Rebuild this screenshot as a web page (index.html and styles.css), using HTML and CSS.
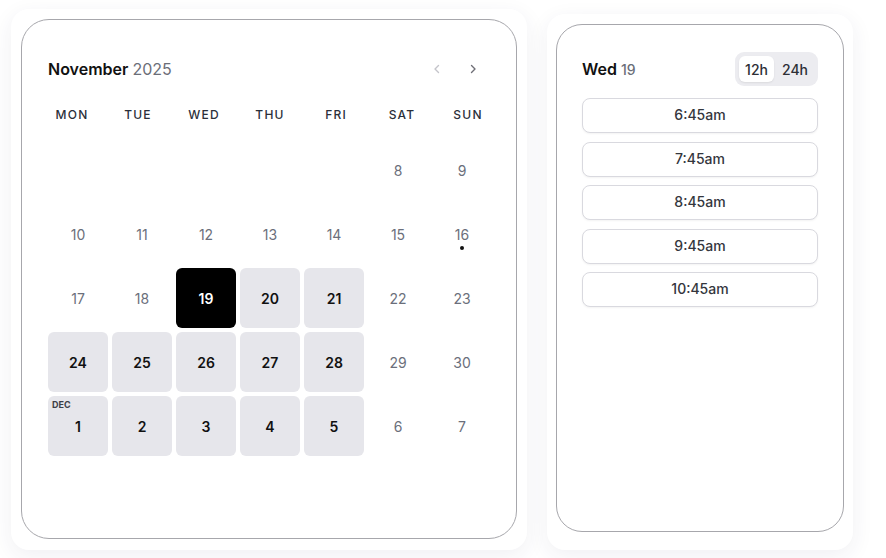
FILE: index.html
```html
<!DOCTYPE html>
<html lang="en">
<head>
<meta charset="utf-8">
<title>Booker</title>
<link rel="stylesheet" href="styles.css">
</head>
<body>
<div class="stage">
  <div class="shell shell-cal">
    <section class="card cal">
      <header class="cal-head">
        <h2 class="month"><span class="month-name">November</span> <span class="year">2025</span></h2>
        <div class="nav">
          <button class="nav-btn prev" aria-label="Previous month">
            <svg width="16" height="16" viewBox="0 0 16 16"><path d="M9.5 4.5L6 8l3.5 3.5" fill="none" stroke="currentColor" stroke-width="1.4" stroke-linecap="round" stroke-linejoin="round"/></svg>
          </button>
          <button class="nav-btn next" aria-label="Next month">
            <svg width="16" height="16" viewBox="0 0 16 16"><path d="M6.5 4.5L10 8l-3.5 3.5" fill="none" stroke="currentColor" stroke-width="1.4" stroke-linecap="round" stroke-linejoin="round"/></svg>
          </button>
        </div>
      </header>
      <div class="weekdays">
        <span>Mon</span><span>Tue</span><span>Wed</span><span>Thu</span><span>Fri</span><span>Sat</span><span>Sun</span>
      </div>
      <div class="days">
        <span class="day empty"></span><span class="day empty"></span><span class="day empty"></span><span class="day empty"></span><span class="day empty"></span>
        <span class="day">8</span><span class="day">9</span>
        <span class="day">10</span><span class="day">11</span><span class="day">12</span><span class="day">13</span><span class="day">14</span><span class="day">15</span><span class="day today">16</span>
        <span class="day">17</span><span class="day">18</span><span class="day avail selected">19</span><span class="day avail">20</span><span class="day avail">21</span><span class="day">22</span><span class="day">23</span>
        <span class="day avail">24</span><span class="day avail">25</span><span class="day avail">26</span><span class="day avail">27</span><span class="day avail">28</span><span class="day">29</span><span class="day">30</span>
        <span class="day avail"><small class="mlabel">Dec</small>1</span><span class="day avail">2</span><span class="day avail">3</span><span class="day avail">4</span><span class="day avail">5</span><span class="day">6</span><span class="day">7</span>
      </div>
    </section>
  </div>
  <div class="shell shell-times">
    <section class="card times">
      <header class="times-head">
        <h3 class="dayname">Wed <span class="daynum">19</span></h3>
        <div class="toggle">
          <button class="tg active">12h</button>
          <button class="tg">24h</button>
        </div>
      </header>
      <div class="slots">
        <button class="slot">6:45am</button>
        <button class="slot">7:45am</button>
        <button class="slot">8:45am</button>
        <button class="slot">9:45am</button>
        <button class="slot">10:45am</button>
      </div>
    </section>
  </div>
</div>
</body>
</html>
```

FILE: styles.css
```css
* { box-sizing: border-box; }

html, body {
  margin: 0;
  background: #ffffff;
  font-family: Inter, "Noto Sans", "Liberation Sans", sans-serif;
  color: #111111;
}

.stage {
  display: flex;
  align-items: flex-end;
  gap: 20px;
  height: 558px;
  padding: 0 0 8px 11px;
}

.shell {
  background: #ffffff;
  border-radius: 18px;
  box-shadow: 0 6px 22px rgba(40, 40, 90, 0.07);
}

.shell-cal { padding: 10px 10px 11px; }
.shell-times { padding: 10px 9px 18px; }

.card {
  background: #ffffff;
  border: 1px solid #a7a7ac;
}

/* Calendar */
.cal {
  width: 496px;
  height: 520px;
  border-radius: 28px;
  padding: 32px 24px 0 26px;
}

.cal-head {
  height: 34px;
  display: flex;
  align-items: center;
  justify-content: space-between;
}

.month {
  margin: 0;
  font-size: 16px;
  line-height: 20px;
  font-weight: 600;
  color: #111111;
}

.year {
  font-weight: 400;
  color: #6b6e78;
}

.nav {
  display: flex;
  gap: 4px;
  margin-right: 3px;
}

.nav-btn {
  width: 32px;
  height: 32px;
  border: 0;
  background: transparent;
  padding: 0;
  display: flex;
  align-items: center;
  justify-content: center;
}

.nav-btn.prev { color: #c4c4ca; }
.nav-btn.next { color: #6e6e76; }

.weekdays {
  margin: 18px -9px 0;
  height: 20px;
  display: grid;
  grid-template-columns: repeat(7, 1fr);
  align-items: center;
}

.weekdays span {
  text-align: center;
  text-transform: uppercase;
  font-size: 12px;
  font-weight: 500;
  letter-spacing: 1.2px;
  color: #2b2f3a;
}

.days {
  margin-top: 16px;
  display: grid;
  grid-template-columns: repeat(7, 1fr);
  grid-auto-rows: 60px;
  gap: 4px;
}

.day {
  position: relative;
  display: flex;
  align-items: center;
  justify-content: center;
  font-size: 14px;
  font-weight: 400;
  color: #6b6f7b;
  border-radius: 6px;
}

.day.today::after {
  content: "";
  position: absolute;
  left: 50%;
  top: 42px;
  width: 4px;
  height: 4px;
  margin-left: -2px;
  border-radius: 50%;
  background: #111111;
}

.day.avail {
  background: #e6e6eb;
  color: #111111;
  font-weight: 600;
}

.day.selected {
  background: #000000;
  color: #ffffff;
}

.mlabel {
  position: absolute;
  left: 4px;
  top: 4px;
  font-size: 9px;
  line-height: 10px;
  font-weight: 700;
  text-transform: uppercase;
  color: #3d3f47;
}

/* Times */
.times {
  width: 288px;
  height: 508px;
  border-radius: 26px;
  padding: 27px 25px;
}

.times-head {
  height: 34px;
  display: flex;
  align-items: center;
  justify-content: space-between;
}

.dayname {
  margin: 0;
  font-size: 16px;
  line-height: 20px;
  font-weight: 600;
  color: #111111;
}

.daynum {
  font-size: 14px;
  font-weight: 500;
  color: #6b6e78;
}

.toggle {
  display: flex;
  height: 34px;
  padding: 4px;
  gap: 2px;
  background: #ececf0;
  border-radius: 9px;
}

.tg {
  border: 0;
  background: transparent;
  font-family: inherit;
  font-size: 14px;
  font-weight: 500;
  color: #2d2f36;
  padding: 0 6px;
  border-radius: 6px;
}

.tg.active {
  background: #ffffff;
  box-shadow: 0 1px 2px rgba(0, 0, 0, 0.08);
}

.slots {
  margin-top: 12px;
  display: flex;
  flex-direction: column;
  gap: 8.5px;
}

.slot {
  height: 35px;
  width: 100%;
  padding: 0 0 2px;
  border: 1px solid #d9d9df;
  border-radius: 8px;
  background: #ffffff;
  box-shadow: 0 1px 2px rgba(0, 0, 0, 0.05);
  font-family: inherit;
  font-size: 14px;
  font-weight: 500;
  color: #34363d;
}
```
